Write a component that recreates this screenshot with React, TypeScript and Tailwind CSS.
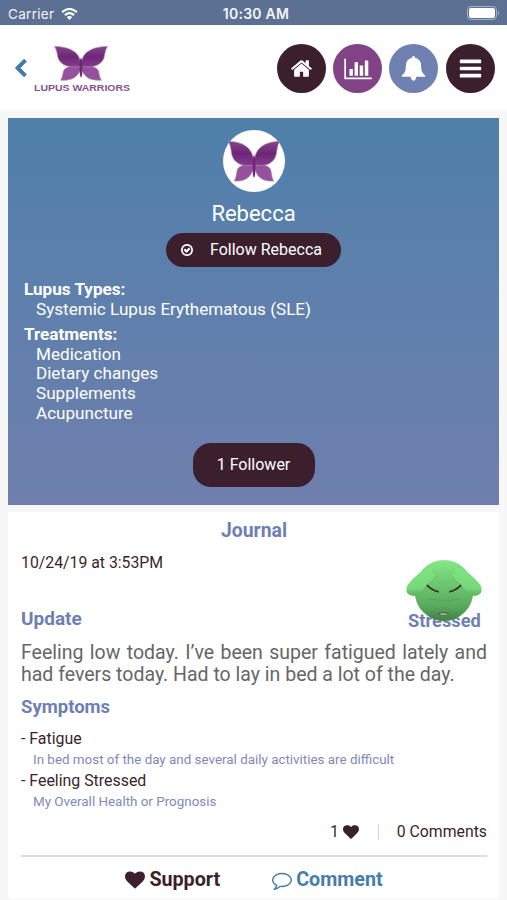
import type { ReactNode } from 'react';

interface GlyphProps {
    d: string;
    className?: string;
    viewBox?: string;
}

const paths = {
    home: 'M1472 992v480q0 26-19 45t-45 19h-384v-384h-256v384h-384q-26 0-45-19t-19-45v-480q0-1 .5-3t.5-3l575-474 575 474q1 2 1 6zm223-69l-62 74q-8 9-21 11h-3q-13 0-21-7l-692-577-692 577q-12 8-24 7-13-2-21-11l-62-74q-8-10-7-23.500t11-21.500l719-599q32-26 76-26t76 26l244 204v-195q0-14 9-23t23-9h192q14 0 23 9t9 23v408l219 182q10 8 11 21.500t-7 23.500z',
    chart: 'M640 896v512h-256v-512h256zm384-512v1024h-256v-1024h256zm1024 1152v128h-2048v-1536h128v1408h1920zm-640-896v768h-256v-768h256zm384-384v1152h-256v-1152h256z',
    bell: 'M896 0q56 0 84 38t16 90q220 50 330 190t114 340q0 300 60 450t220 272q30 24 16 68t-64 48h-576q-10 150-80 210-40 40-120 86-80-46-120-86-70-60-80-210h-576q-50-4-64-48t16-68q160-122 220-272t60-450q4-200 114-340t330-190q-12-52 16-90t84-38z',
    bars: 'M1664 1344v128q0 26-19 45t-45 19h-1408q-26 0-45-19t-19-45v-128q0-26 19-45t45-19h1408q26 0 45 19t19 45zm0-512v128q0 26-19 45t-45 19h-1408q-26 0-45-19t-19-45v-128q0-26 19-45t45-19h1408q26 0 45 19t19 45zm0-512v128q0 26-19 45t-45 19h-1408q-26 0-45-19t-19-45v-128q0-26 19-45t45-19h1408q26 0 45 19t19 45z',
    back: 'M1427 301l-531 531 531 531q19 19 19 45t-19 45l-166 166q-19 19-45 19t-45-19l-742-742q-19-19-19-45t19-45l742-742q19-19 45-19t45 19l166 166q19 19 19 45t-19 45z',
    check: 'M1299 813l-422 422q-19 19-45 19t-45-19l-294-294q-19-19-19-45t19-45l102-102q19-19 45-19t45 19l147 147 275-275q19-19 45-19t45 19l102 102q19 19 19 45t-19 45zm141 83q0-148-73-273t-198-198-273-73-273 73-198 198-73 273 73 273 198 198 273 73 273-73 198-198 73-273zm224 0q0 209-103 385.500t-279.500 279.500-385.500 103-385.500-103-279.500-279.500-103-385.500 103-385.500 279.500-279.500 385.500-103 385.500 103 279.500 279.500 103 385.500z',
    heart: 'M896 1664q-26 0-44-18l-624-602q-10-8-27.500-26t-55.500-65.500-68-97.500-53.500-121-23.500-138q0-220 127-344t351-124q62 0 126.500 21.500t120 58 95.500 68.500 76 68q36-36 76-68t95.500-68.500 120-58 126.500-21.500q224 0 351 124t127 344q0 221-229 450l-623 600q-18 18-44 18z',
    comment: 'M896 384q-204 0-381.500 69.500t-282 187.500-104.500 255q0 112 71.500 213.500t201.500 175.500l87 50-27 96q-24 91-70 172 152-63 275-171l43-38 57 6q69 8 130 8 204 0 381.500-69.500t282-187.500 104.500-255-104.500-255-282-187.500-381.500-69.500zm896 512q0 174-120 321.500t-326 233-450 85.500q-70 0-145-8-198 175-460 242-49 14-114 22h-5q-15 0-27-10.500t-16-27.500v-1q-3-4-.5-12t2-10 4.500-9.500l6-9 7-8.500 8-9q7-8 31-34.500t34.500-38 31-39.500 32.500-51 27-59 26-76q-157-89-247.500-220t-90.500-281q0-174 120-321.500t326-233 450-85.500 450 85.500 326 233 120 321.500z',
};

function Glyph({ d, className, viewBox = '0 0 1792 1792' }: GlyphProps) {
    return (
        <svg viewBox={viewBox} className={className} fill="currentColor" aria-hidden="true">
            <path d={d} />
        </svg>
    );
}

function Butterfly({ id, className }: { id: string; className?: string }) {
    return (
        <svg viewBox="0 0 54 42" preserveAspectRatio="none" className={className} aria-hidden="true">
            <defs>
                <linearGradient id={id} x1="0" y1="0" x2="0" y2="1">
                    <stop offset="0" stopColor="#84458b" />
                    <stop offset="0.5" stopColor="#702678" />
                    <stop offset="1" stopColor="#853c8d" />
                </linearGradient>
            </defs>
            <g stroke="#a78fa8" strokeWidth="0.7">
                <path d="M26 25C18 23 11 25 9.500 30C8.500 35 8.500 38 6.500 41C16 41.500 23 39 26 29Z" fill="#95509f" />
                <path d="M28 25C36 23 43 25 44.500 30C45.500 35 45.500 38 47.500 41C38 41.500 31 39 28 29Z" fill="#95509f" />
                <path d="M0.500 0.500C14 0.500 25 6 26.500 19L26.500 24.500C14 27 6 22 4 14C3 9 3 5 0.500 0.500Z" fill={`url(#${id})`} />
                <path d="M53.500 0.500C40 0.500 29 6 27.500 19L27.500 24.500C40 27 48 22 50 14C51 9 51 5 53.500 0.500Z" fill={`url(#${id})`} />
            </g>
            <ellipse cx="27" cy="26" rx="1.600" ry="11.500" fill="#6f2878" />
        </svg>
    );
}

function StressedFace() {
    return (
        <svg viewBox="0 0 80 64" className="relative h-16 w-20" aria-hidden="true">
            <defs>
                <linearGradient id="face" x1="0" y1="0" x2="0" y2="1">
                    <stop offset="0" stopColor="#86e889" />
                    <stop offset="0.350" stopColor="#6ecb71" />
                    <stop offset="0.750" stopColor="#5aab5d" />
                    <stop offset="1" stopColor="#3f8146" />
                </linearGradient>
                <linearGradient id="hand" x1="0" y1="0" x2="0" y2="1">
                    <stop offset="0" stopColor="#80e383" />
                    <stop offset="0.700" stopColor="#78d97b" />
                    <stop offset="1" stopColor="#5cb15f" />
                </linearGradient>
            </defs>
            <ellipse cx="40" cy="32.500" rx="30.500" ry="31.500" fill="url(#face)" />
            <path d="M24 41Q40 45 56 41" fill="none" stroke="#4e9952" strokeWidth="1.500" opacity="0.350" />
            <path d="M28 9Q20 9 14 15Q7 21 3 26Q0 30 2 35Q6 40 13 37Q19 33 22 27Q29 23 32 17Q31 14 27 16Z" fill="url(#hand)" />
            <path d="M52 9Q60 9 66 15Q73 21 77 26Q80 30 78 35Q74 40 67 37Q61 33 58 27Q51 23 48 17Q49 14 53 16Z" fill="url(#hand)" />
            <path d="M15 35.500Q20 32 22 27Q29 23 32 17M65 35.500Q60 32 58 27Q51 23 48 17" fill="none" stroke="#55a859" strokeWidth="0.900" opacity="0.700" />
            <path d="M22.500 27Q27 32 34.500 34M57.500 27Q53 32 45.500 34" fill="none" stroke="#3b2f22" strokeWidth="1.800" />
            <ellipse cx="39.500" cy="56.500" rx="6" ry="1.900" fill="#586450" />
            <ellipse cx="39.500" cy="56.800" rx="4" ry="0.900" fill="#a9b6a2" />
        </svg>
    );
}

function RoundButton({ className, label, children }: { className: string; label: string; children: ReactNode }) {
    return (
        <button aria-label={label} className={`flex h-[49px] w-[49px] items-center justify-center rounded-full text-white ${className}`}>
            {children}
        </button>
    );
}

const treatments = ['Medication', 'Dietary changes', 'Supplements', 'Acupuncture'];

const symptoms = [
    { name: 'Fatigue', detail: 'In bed most of the day and several daily activities are difficult' },
    { name: 'Feeling Stressed', detail: 'My Overall Health or Prognosis' },
];

export default function App() {
    return (
        <div className="h-[900px] w-[507px] overflow-hidden bg-[#f7f7f7] font-['Roboto',sans-serif] text-[#3b1f2d]">
            <div className="grid h-[25px] grid-cols-3 items-center bg-[#5b7093] px-2 font-['Inter',sans-serif] text-[13.500px] text-[#f3f5f8]">
                <div className="flex items-center gap-[7px] pt-[3px] tracking-[0.3px]">
                    Carrier
                    <svg viewBox="0 0 18 13" className="h-3 w-[17px]" aria-hidden="true">
                        <path d="M1 4.500Q9-2.500 17 4.500M4 7.700Q9 3.500 14 7.700" fill="none" stroke="white" strokeWidth="2.300" />
                        <path d="M6 9.800Q9 7.500 12 9.800L9 13Z" fill="white" />
                    </svg>
                </div>
                <div className="pt-0.5 pl-[5px] text-center text-[14px] font-semibold tracking-[0.25px] whitespace-nowrap">10:30 AM</div>
                <div className="flex items-center justify-end gap-px">
                    <div className="h-[14px] w-[30px] rounded-[4px] border border-[#a3b0c6] p-px">
                        <div className="h-full rounded-[2px] bg-white" />
                    </div>
                    <div className="h-1 w-px rounded-r bg-[#a3b0c6]" />
                </div>
            </div>

            <header className="flex h-[85px] items-center bg-white pr-[12.500px] pl-3.5">
                <Glyph d={paths.back} className="h-[18px] w-[13px] text-[#417aa8]" viewBox="346 26 1100 1612" />
                <div className="ml-[7px] flex w-24 flex-col items-center pt-[5px]">
                    <Butterfly id="logo-wing" className="mr-[3px] h-[35px] w-[54px]" />
                    <svg viewBox="0 0 96 11" className="mt-0.5 h-[11px] w-24" aria-label="Lupus Warriors">
                        <text x="0" y="8" textLength="96" lengthAdjust="spacingAndGlyphs" fill="#8a5190" fontFamily="Liberation Sans" fontSize="9" fontWeight="bold">LUPUS WARRIORS</text>
                    </svg>
                </div>
                <nav className="ml-auto flex gap-[7.200px] pt-0.5">
                    <RoundButton label="Home" className="bg-[#3b1f2d]">
                        <Glyph d={paths.home} className="h-[23px] w-[23px]" />
                    </RoundButton>
                    <RoundButton label="Statistics" className="bg-[#814286]">
                        <Glyph d={paths.chart} className="h-6 w-7" viewBox="0 0 2048 1792" />
                    </RoundButton>
                    <RoundButton label="Notifications" className="bg-[#6f81b0]">
                        <Glyph d={paths.bell} className="h-[25px] w-[25px]" />
                    </RoundButton>
                    <RoundButton label="Menu" className="bg-[#3b1f2d]">
                        <Glyph d={paths.bars} className="h-[25px] w-[25px]" />
                    </RoundButton>
                </nav>
            </header>

            <main className="px-2 pt-2">
                <section className="flex h-[387px] flex-col items-center bg-linear-to-b from-[#4e80aa] to-[#6f7fae] pt-3 text-white">
                    <div className="flex h-[62px] w-[62px] items-center justify-center rounded-full bg-white">
                        <Butterfly id="avatar-wing" className="h-[41px] w-[52px]" />
                    </div>
                    <h1 className="mt-2 text-[22px] leading-7">Rebecca</h1>
                    <button className="mt-[5px] flex h-[34px] w-[175px] items-center gap-4 rounded-full bg-[#3b1f2d] pl-3.5 text-base">
                        <Glyph d={paths.check} className="h-3.5 w-3.5" />
                        Follow Rebecca
                    </button>
                    <div className="mt-[13px] w-full px-4 text-[17.100px] leading-[19.600px]">
                        <h2 className="text-[17.100px] font-bold">Lupus Types:</h2>
                        <p className="pl-3">Systemic Lupus Erythematous (SLE)</p>
                        <h2 className="mt-1.5 text-[17.100px] font-bold">Treatments:</h2>
                        <ul className="pl-3">
                            {treatments.map((item) => (
                                <li key={item}>{item}</li>
                            ))}
                        </ul>
                    </div>
                    <button className="mt-5 h-11 w-[122px] rounded-[18px] bg-[#3b1f2d] text-base">1 Follower</button>
                </section>

                <section className="mt-[7px] h-[387px] rounded-b bg-white pt-[7px] pr-3 pl-[13px]">
                    <h2 className="text-center text-[19.400px] leading-6 font-bold text-[#6f7fb3]">Journal</h2>
                    <div className="flex h-[90px] justify-between">
                        <div className="flex flex-col justify-between">
                            <time className="mt-2 text-[15.800px] leading-6">10/24/19 at 3:53PM</time>
                            <h3 className="text-[19px] leading-7 font-bold text-[#6f7fb3]">Update</h3>
                        </div>
                        <div className="mt-4 mr-[3px] flex flex-col items-center">
                            <StressedFace />
                            <span className="-mt-3 pl-px text-[18.300px] leading-6 font-bold text-[#6f7fb3]">Stressed</span>
                        </div>
                    </div>
                    <p className="mt-[9px] text-justify text-[19.500px] leading-[22px] text-[#666]">
                        Feeling low today. I’ve been super fatigued lately and had fevers today. Had to lay in bed a lot of the day.
                    </p>
                    <h3 className="mt-[7px] text-[18.500px] leading-7 font-bold text-[#6f7fb3]">Symptoms</h3>
                    <ul className="mt-[7px]">
                        {symptoms.map((symptom) => (
                            <li key={symptom.name}>
                                <div className="text-[15.900px] leading-[22px]">- {symptom.name}</div>
                                <div className="pl-3 text-[13.400px] leading-5 text-[#7f89b8]">{symptom.detail}</div>
                            </li>
                        ))}
                    </ul>
                    <div className="mt-2 flex h-6 items-center justify-end text-[15.800px]">
                        1
                        <Glyph d={paths.heart} className="ml-1 h-4 w-4" />
                        <span className="mr-[18px] ml-[19px] h-4 w-px bg-[#d5d3d4]" />
                        0 Comments
                    </div>
                    <div className="mt-[11px] flex h-12 justify-center gap-[52px] border-t-2 border-[#dcdbdc] text-[19.700px] font-bold">
                        <button className="flex items-center gap-1">
                            <Glyph d={paths.heart} className="h-5 w-5" />
                            Support
                        </button>
                        <button className="flex items-center gap-1 text-[#467dab]">
                            <Glyph d={paths.comment} className="h-5 w-5" />
                            Comment
                        </button>
                    </div>
                </section>
            </main>
        </div>
    );
}
